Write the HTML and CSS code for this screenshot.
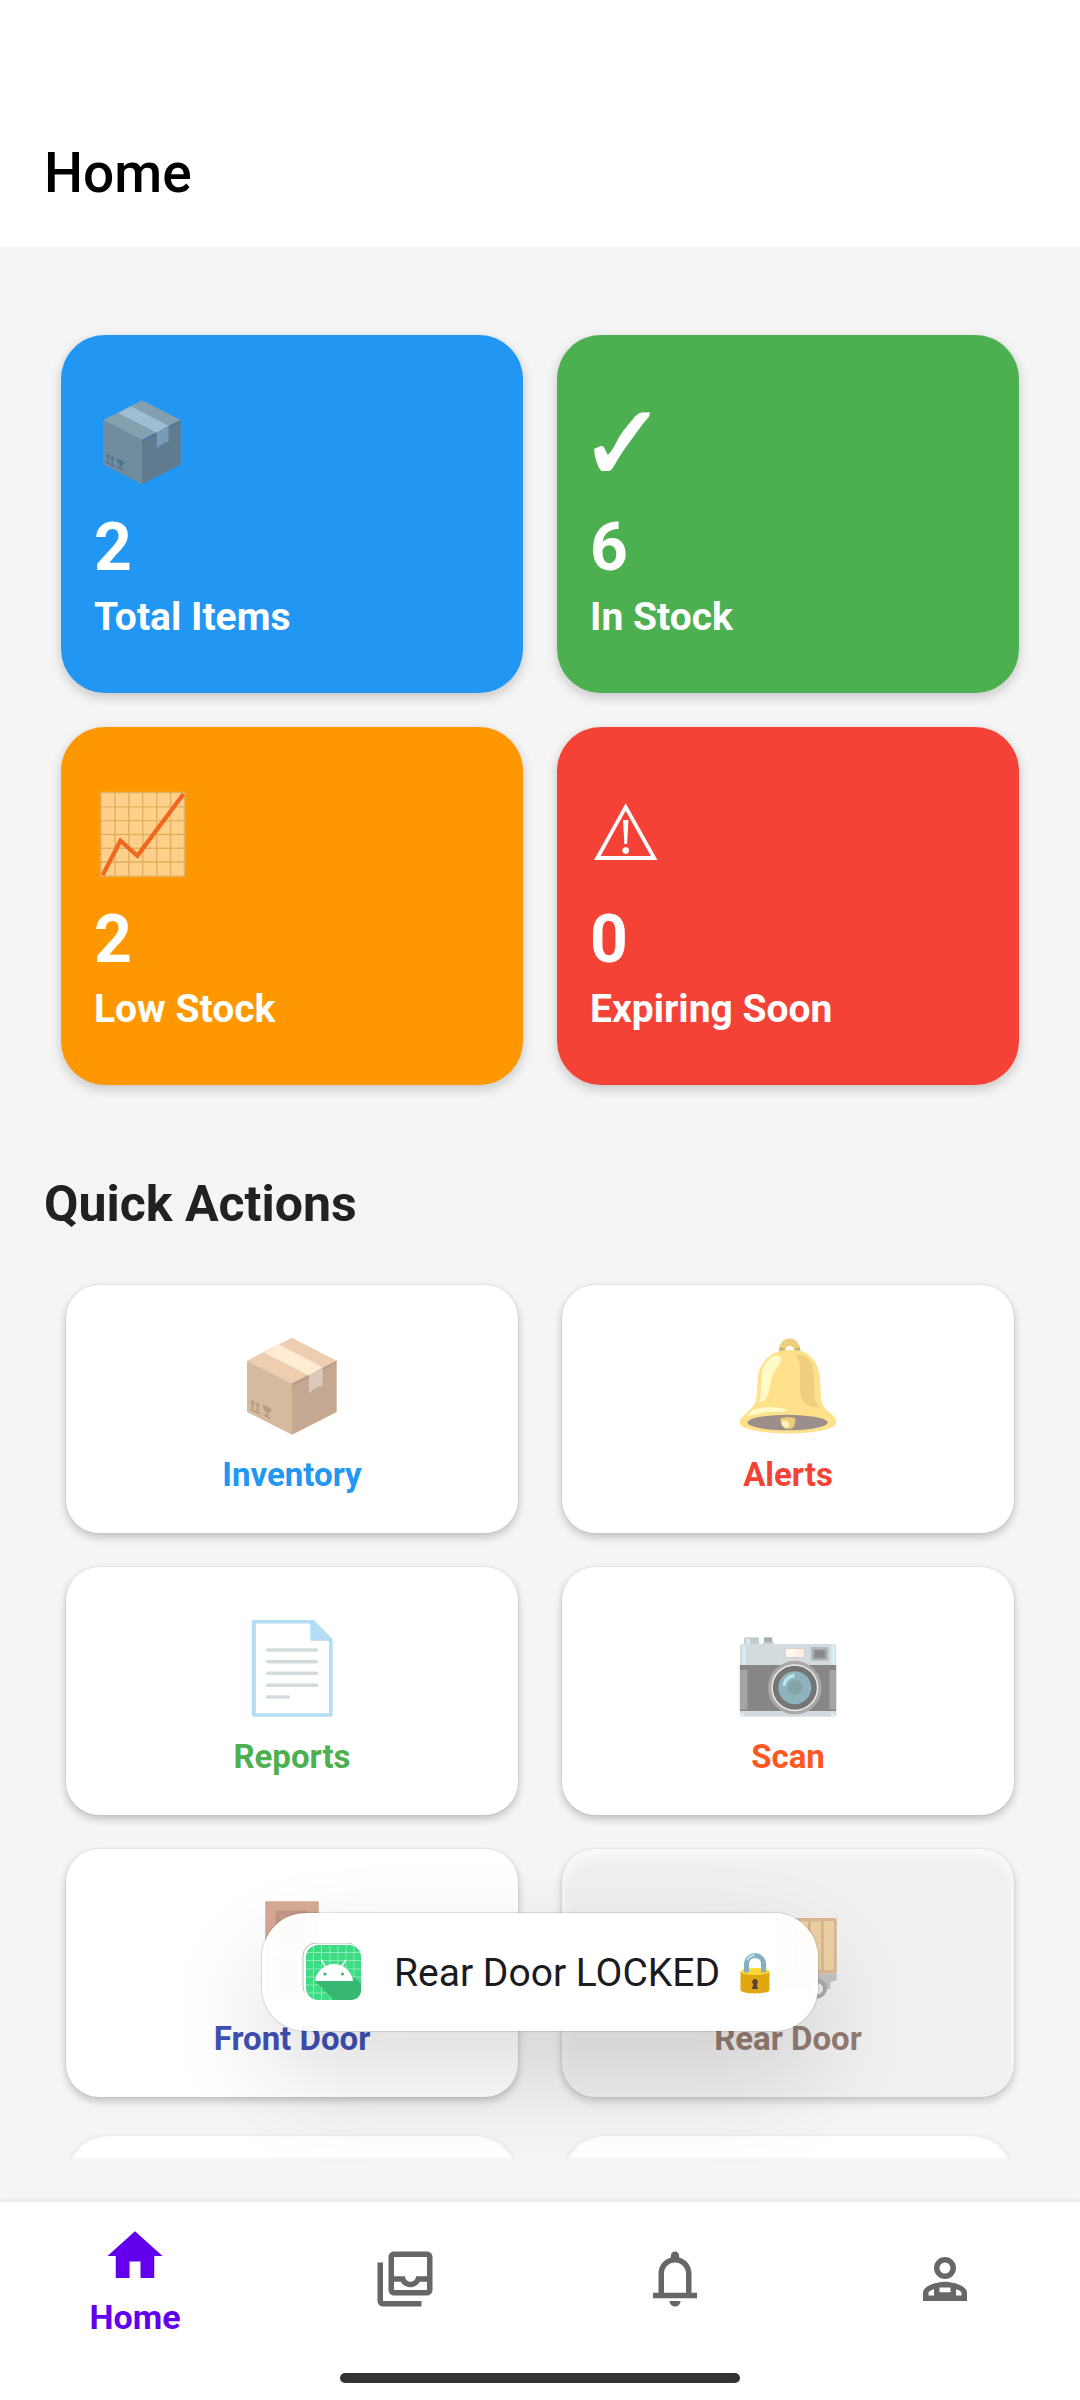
FILE: index.html
```html
<!DOCTYPE html>
<html lang="en">
<head>
    <meta charset="UTF-8">
    <meta name="viewport" content="width=device-width, initial-scale=1.0">
    <title>Home</title>
    <link rel="stylesheet" href="styles.css">
</head>
<body>
    <!-- package is used twice, its colours come from the card -->
    <svg class="sprite" aria-hidden="true">
        <symbol id="package" viewBox="0 0 128 128">
            <path fill="var(--box-top)" d="M64 4.5 119 32.8 64 61 8.6 32.8z"/>
            <path fill="var(--box-left)" d="M8.6 32.8 64 61v63L8.6 96z"/>
            <path fill="var(--box-right)" d="M119 32.8 64 61v63l55-28z"/>
            <path fill="var(--box-mark)" d="M64 61 119 32.8v1.6Q92 52 64 63.5z"/>
            <path fill="var(--box-tape)" d="M48 13 30 23l55 28 16.700-10z"/>
            <path fill="var(--box-flap)" d="M85 51l16.700-10v23l-5 1-7.200 4-4.500 4z"/>
            <g fill="none" stroke="var(--box-mark)" stroke-width="2">
                <path d="M15.500 92V83M21.700 95V86M13 92.500 25 98.500M13.500 84.500l2-2 2.500 3M19.500 88l2.200-2.500 2.500 3M29 99.500l8.500 4.500M33.500 96v6"/>
            </g>
            <path fill="var(--box-mark)" d="M27.500 86.600 39 92.300c-.5 4-3.500 6-6 4.500-2.500-1.500-5-4.500-5.500-10.200z"/>
        </symbol>
    </svg>

    <header class="topbar">
        <h1>Home</h1>
    </header>

    <main class="content">
        <section class="stats">
            <div class="stat blue">
                <svg class="stat-icon" aria-hidden="true"><use href="#package"/></svg>
                <span class="stat-value">2</span>
                <span class="stat-label">Total Items</span>
            </div>
            <div class="stat green">
                <svg class="stat-icon" viewBox="0 0 96 90" aria-hidden="true">
                    <path fill="#fff" d="M4 52 10.600 49q3-.5 4.200 3L17.800 58Q22 54 25 48q3-7 7.600-13.300Q37 29 43 22q4-5.500 8.500-6.500l8.300-.2q.300 2-.8 4.400Q53 26 46.400 35.700L32.600 54.700Q28 62 24 69q-2 4-4.500 5h-8.200Q8 70 6.800 65.700 4.500 59 4 52z"/>
                </svg>
                <span class="stat-value">6</span>
                <span class="stat-label">In Stock</span>
            </div>
            <div class="stat orange">
                <svg class="stat-icon" viewBox="0 0 128 128" aria-hidden="true">
                    <path fill="#ffd08a" stroke="#e1af61" stroke-width="2" d="M5.500 5h119v119H5.500z"/>
                    <path fill="none" stroke="#e1af61" stroke-width="2" d="M25.600 5v119M45.300 5v119M65 5v119M85 5v119M104.600 5v119M5 25.400h119M5 45h119M5 64.600h119M5 84.200h119M5 103.800h119"/>
                    <path fill="none" stroke="#f0681f" stroke-width="6" d="M8 122.700 33.400 73.500l24 21.500L123 7"/>
                </svg>
                <span class="stat-value">2</span>
                <span class="stat-label">Low Stock</span>
            </div>
            <div class="stat red">
                <svg class="stat-icon" viewBox="0 0 96 90" aria-hidden="true">
                    <path fill="#fff" fill-rule="evenodd" d="M35.700 14.300 4 71h63.400zM35.700 21.700 60.900 67H10.600z"/>
                    <path fill="#fff" d="M33 31h5.500l-1.400 24h-2.700z"/>
                    <circle fill="#fff" cx="35.700" cy="61.600" r="3.300"/>
                </svg>
                <span class="stat-value">0</span>
                <span class="stat-label">Expiring Soon</span>
            </div>
        </section>

        <h2>Quick Actions</h2>

        <section class="actions">
            <button type="button" class="action inventory">
                <svg class="action-icon" aria-hidden="true"><use href="#package"/></svg>
                <span>Inventory</span>
            </button>
            <button type="button" class="action alerts">
                <svg class="action-icon" viewBox="0 0 128 128" aria-hidden="true">
                    <path fill="#efcf7e" fill-rule="evenodd" d="M53 22c-1-9 5-16.500 13-16.500S80 13 79 22zM60.500 20h11c0-7-11-7-11 0z"/>
                    <path fill="#c9b27c" d="M53.200 16.500l7.300 1L59 21h-5.500zM71.500 17.500l7.300-1V22h-6z"/>
                    <path fill="#ffe18c" d="M66 19.700c-9 0-14 1-19 4C36 29 29 40 27 52c-1.600 11-.5 20-2.500 30-1.500 7-7 10-12 15.500-4 4-8 7-8 10.500s2 6 5 7c14 5 33 7.500 54.400 7.500S105 120 118 115c3.500-1.500 5.500-4 5.500-7.500 0-4-4-7-8.500-11-5-4.500-9-8-10-16-1.500-11-.5-22-2.500-32C100.500 37 95 29 86 23.500c-5-3-11-3.800-20-3.800z"/>
                    <path fill="#efcf7e" d="M72.400 24.600C83 25 90 29 93 36c4 9 3 25 3.200 36 .3 8 2.500 14 6.800 18.700-9-.5-16-2.500-20-7.400-3.500-4.500-4.300-10-4.300-17V43c0-8-2-14-6.300-18.400z"/>
                    <path fill="#fffac8" d="M55.500 31c0-5-8-5.500-14-1C33 37 31 47 31 58c.3 9-.7 16-2 26 5 0 9-4 11-12 2.500-11 4-20 8-27 3-5 7.500-8 7.500-14zM14.300 101c3-6 7-9 15-10 12-1.500 27-1 34.700 3.400-9 2.500-17 1-26 2-8 .8-15 2.600-23.700 4.600z"/>
                    <ellipse fill="#9c8f8b" cx="63.500" cy="109" rx="49.500" ry="9.500"/>
                    <path fill="#e9cc7c" d="M55 103.500c5-1.500 13-1.500 17.500 0 1.500 4-.5 12.500-5 13h-6c-5-1-8-9-6.500-13z"/>
                    <ellipse fill="#fff0b0" cx="61" cy="111" rx="5" ry="4" transform="rotate(40 61 111)"/>
                </svg>
                <span>Alerts</span>
            </button>
            <button type="button" class="action reports">
                <svg class="action-icon" viewBox="0 0 128 128" aria-hidden="true">
                    <path fill="#b4dcf5" d="M16.500 5H91l23 23.700v93.600q0 1.700-1.700 1.700h-96q-1.600 0-1.600-1.700V6.700Q14.700 5 16.500 5z"/>
                    <path fill="#fff" d="M19.500 9.300H84q2.600 0 2.600 2.500v18.600H107q2.600 0 2.600 2.600v86.800H19.500z"/>
                    <path stroke="#d3dbde" stroke-width="4.300" stroke-linecap="round" d="M34 41.800h60.300M34 56.200h60.300M34 70.600h60.300M34 85.300h60.300M34 99.700h25.500"/>
                </svg>
                <span>Reports</span>
            </button>
            <button type="button" class="action scan">
                <svg class="action-icon" viewBox="0 0 128 128" aria-hidden="true">
                    <rect fill="#c2cdd1" x="10" y="26" width="18.500" height="12" rx="2"/>
                    <rect fill="#d8eef3" x="13" y="28" width="4" height="9"/>
                    <path fill="#c2cdd1" d="M35 31h10l2.500 4H32z"/>
                    <rect fill="#a0afb8" x="34.300" y="26" width="10.500" height="6" rx="2"/>
                    <rect fill="#d4dbdf" x="4.800" y="34.500" width="118.500" height="89.500" rx="3"/>
                    <path fill="#d8eef3" d="M8 37h4v23H8zM117.500 36h4.500v24h-4.500zM6 119h4v4H6zM117 119h4v4h-4z"/>
                    <path fill="#878787" d="M4.800 60.300h118.500V117H4.800z"/>
                    <path fill="#a5a5a5" d="M5 66.500h8q1 0 1 1V115H5zM115 66.500h8V115h-8z"/>
                    <rect fill="#fff7ec" stroke="#c4c8ca" x="60.500" y="39.800" width="23.500" height="11.400"/>
                    <path fill="#fdf0e2" d="M74 40.500h9.500v10H74z"/>
                    <rect fill="#b4bbc0" x="92" y="38" width="22" height="17" rx="1"/>
                    <rect fill="#878787" stroke="#9d9fa1" stroke-width="2" x="96" y="41.500" width="14" height="10.500"/>
                    <circle fill="#a9a9a9" cx="72.400" cy="88.200" r="33"/>
                    <circle fill="#757575" stroke="#f2ece9" stroke-width="1.800" cx="72.400" cy="88.200" r="28"/>
                    <circle fill="#8db3bd" cx="72.400" cy="88.200" r="20.300"/>
                    <circle fill="#86a2aa" cx="72.400" cy="88.200" r="9"/>
                    <path fill="none" stroke="#bfe2ec" stroke-width="4.500" stroke-linecap="round" d="M59.500 84c1-5 5-9 10.500-10.500"/>
                </svg>
                <span>Scan</span>
            </button>
            <button type="button" class="action front-door">
                <svg class="action-icon" viewBox="0 0 128 128" aria-hidden="true">
                    <rect fill="#d5a995" x="31" y="4" width="66" height="120.500" rx="1.500"/>
                    <path fill="#bf9686" d="M44 15.600h38v38H44zM44 78h38v38H44z"/>
                    <path fill="#c79d8c" d="M49 20h33v33.600H49zM49 82h33v34H49z"/>
                    <circle fill="#fff" cx="42" cy="64" r="5"/>
                </svg>
                <span>Front Door</span>
            </button>
            <button type="button" class="action rear-door pressed">
                <svg class="action-icon" viewBox="0 0 128 128" aria-hidden="true">
                    <path fill="#e4e4e4" d="M55 52H32L22 72 5 78v28h50z"/>
                    <path fill="#c4c4c4" d="M5 93h119v8l-8 3v8h-6L6 106z"/>
                    <rect fill="#ddb694" x="55" y="24.600" width="69" height="68.400" rx="2"/>
                    <path fill="#edd2a4" d="M59 28.500h13V89H59zM75 28.500h13.500V89H75zM92 28.500h12.500V89H92zM108 28.500h12.500V89H108z"/>
                    <circle fill="#eee" stroke="#aeaaa8" stroke-width="5" cx="100" cy="111.600" r="9.500"/>
                    <circle fill="#eee" stroke="#aeaaa8" stroke-width="5" cx="30" cy="111.600" r="9.500"/>
                </svg>
                <span>Rear Door</span>
            </button>
        </section>

        <section class="panels">
            <div class="panel"></div>
            <div class="panel"></div>
        </section>
    </main>

    <div class="toast" role="status">
        <svg class="toast-app" viewBox="0 2 60 60" aria-hidden="true">
            <rect fill="#fff" stroke="#bdbdbd" stroke-width="1" x="1" y="2" width="57" height="56" rx="13"/>
            <rect fill="#fff" x="2" y="3" width="58" height="58" rx="14"/>
            <rect fill="#3ddc84" x="4" y="4" width="55" height="55" rx="12"/>
            <path stroke="#8beab5" stroke-width="1" d="M11.500 5v53M19.500 4v55M28 4v55M36 4v55M44 4v55M52 5v53M5 11.500h53M4 19.500h55M4 28h55M4 36h55M4 44h55M5 52h53"/>
            <path fill="#36b873" d="M13 40h38l1-4 7 7v5q0 11-11 11H32z"/>
            <path fill="#fff" d="M13 40c1-9 9-17 19-17s18 8 19 17z"/>
            <path stroke="#fff" stroke-width="1.500" d="M19.500 19l4 7M43.500 19l-4 7"/>
            <circle fill="#36b873" cx="23" cy="33" r="1.600"/>
            <circle fill="#36b873" cx="40.500" cy="33" r="1.600"/>
        </svg>
        <span>Rear Door LOCKED</span>
        <svg class="toast-lock" viewBox="0 0 30 42" aria-hidden="true">
            <path fill="none" stroke="#87afc1" stroke-width="5" d="M6.500 21v-8.500c0-12 17-12 17 0V21"/>
            <path fill="none" stroke="#b9e4ea" stroke-width="1.800" stroke-linecap="round" d="M7.500 7.500Q9.500 4 14 3"/>
            <path fill="#e2a610" d="M.500 20h29v18c0 4.500-29 4.500-29 0z"/>
            <ellipse fill="#fdd835" cx="15" cy="19.500" rx="14.500" ry="3.500"/>
            <path fill="#87afc1" d="M4 14h5v6.500H4zM21 14h5v6.500h-5z"/>
            <path fill="#5d4037" d="M15 27a3 3 0 0 1 1.800 5.300L18 37h-6l1.200-4.700A3 3 0 0 1 15 27z"/>
        </svg>
    </div>

    <nav class="tabbar">
        <div class="tabs">
            <a href="#home" class="tab active" aria-current="page">
                <svg viewBox="0 0 24 24" aria-hidden="true"><path d="M10 20v-6h4v6h5v-8h3L12 3 2 12h3v8z"/></svg>
                <span>Home</span>
            </a>
            <a href="#inventory" class="tab" aria-label="Inventory">
                <svg viewBox="0 0 24 24" aria-hidden="true"><path d="M4 6H2v14c0 1.100.9 2 2 2h14v-2H4V6z"/><path fill-rule="evenodd" d="M20 2H8c-1.100 0-2 .9-2 2v12c0 1.100.9 2 2 2h12c1.100 0 2-.9 2-2V4c0-1.100-.9-2-2-2zM20 16H8v-3h2.500c.69 1.190 1.970 2 3.450 2s2.750-.81 3.450-2H20v3zM20 11h-4c0 1.100-.9 2-2 2s-2-.9-2-2H8V4h12v7z"/></svg>
            </a>
            <a href="#alerts" class="tab" aria-label="Alerts">
                <svg viewBox="0 0 24 24" aria-hidden="true"><path d="M12 22c1.100 0 2-.9 2-2h-4c0 1.100.9 2 2 2z"/><path fill-rule="evenodd" d="M12 2c-.83 0-1.500.67-1.500 1.500v.7C7.900 4.900 6 7.200 6 10v7H4v2h16v-2h-2v-7c0-2.800-1.900-5.100-4.500-5.800v-.7C13.500 2.670 12.830 2 12 2zM16 17H8v-7c0-2.200 1.800-4 4-4s4 1.800 4 4v7z"/></svg>
            </a>
            <a href="#profile" class="tab" aria-label="Profile">
                <svg viewBox="0 0 24 24" aria-hidden="true"><path fill-rule="evenodd" d="M12 4a4 4 0 1 0 0 8 4 4 0 0 0 0-8zM12 6a2 2 0 1 1 0 4 2 2 0 0 1 0-4z"/><path fill-rule="evenodd" d="M4 17c0-2.660 5.330-4 8-4s8 1.340 8 4v3H4zM6 18h2v-2.300c-1.200.4-2 .9-2 1.300zM10 15.100h4V16.800h-4zM16 15.700V18h2v-1c0-.4-.8-.9-2-1.300z"/></svg>
            </a>
        </div>
        <div class="gesture"></div>
    </nav>
</body>
</html>
```
FILE: styles.css
```css
* {
    box-sizing: border-box;
}
body {
    display: flex;
    flex-direction: column;
    height: 100vh;
    margin: 0;
    position: relative;
    font-family: Roboto, "Liberation Sans", sans-serif;
    background-color: #f5f5f5;
}
.sprite {
    position: absolute;
    width: 0;
    height: 0;
}
.topbar {
    padding: 141px 44px 42px;
    background: #fff;
}
h1 {
    margin: 0;
    font-size: 55px;
    line-height: 64px;
    font-weight: 500;
    color: #000;
}

/* scrolling area, cut off above the tab bar */
.content {
    flex: 1;
    min-height: 0;
    margin-bottom: 44px;
    padding: 88px 44px 0;
    overflow-y: auto;
    scrollbar-width: none;
}
.stats {
    display: grid;
    grid-template-columns: 1fr 1fr;
    gap: 34px;
    padding: 0 17px;
}
.stat {
    display: flex;
    flex-direction: column;
    align-items: flex-start;
    padding: 62px 33px 53px;
    border-radius: 44px;
    color: #fff;
    font-weight: 700;
    box-shadow: 0 4px 12px rgba(0,0,0,0.2);
}
.stat-icon {
    width: 96px;
    height: 90px;
}
.stat-value {
    margin-top: 23px;
    font-size: 66px;
    line-height: 76px;
}
.stat-label {
    margin-top: 8px;
    font-size: 39px;
    line-height: 46px;
}
.blue {
    background-color: #2196f3;
    --box-top: #849fae;
    --box-left: #708c9e;
    --box-right: #607b8f;
    --box-tape: #9cbfd3;
    --box-flap: #779cb9;
    --box-mark: #507693;
}
.green {
    background-color: #4caf50;
}
.orange {
    background-color: #ff9800;
}
.red {
    background-color: #f44336;
}
h2 {
    margin: 90px 0 52px;
    font-size: 50px;
    line-height: 58px;
    font-weight: 700;
    color: #212121;
}

.actions, .panels {
    display: grid;
    grid-template-columns: 1fr 1fr;
    gap: 34px 44px;
    padding: 0 22px;
}
.action {
    display: flex;
    flex-direction: column;
    align-items: center;
    gap: 18px;
    padding: 49px 0 39px;
    border: none;
    border-radius: 33px;
    background-color: #fff;
    font-family: inherit;
    font-size: 33px;
    line-height: 38px;
    font-weight: 700;
    cursor: pointer;
    box-shadow: 0 4px 8px rgba(0,0,0,0.22), 0 0 2px rgba(0,0,0,0.12);
}
.action-icon {
    width: 104px;
    height: 104px;
}
.inventory {
    color: #2196f3;
    --box-top: #edcfb0;
    --box-left: #d6ba9f;
    --box-right: #c5a891;
    --box-tape: #ffecd3;
    --box-flap: #dbc8ba;
    --box-mark: #b59c85;
}
.alerts {
    color: #f44336;
}
.reports {
    color: #4caf50;
}
.scan {
    color: #ff5722;
}
.front-door {
    color: #3f51b5;
}
.rear-door {
    color: #957c73;
}
.pressed {
    background-color: #f0f0f0;
    box-shadow: 0 4px 8px rgba(0,0,0,0.2), 0 0 2px rgba(0,0,0,0.12), inset 0 6px 12px rgba(255,255,255,0.8);
}
.panels {
    margin-top: 39px;
    padding-bottom: 44px;
}
.panel {
    height: 248px;
    border-radius: 44px;
    background-color: #fff;
    box-shadow: 0 2px 8px rgba(0,0,0,0.1);
}

.toast {
    position: absolute;
    bottom: 369px;
    left: 50%;
    transform: translateX(-50%);
    display: flex;
    align-items: center;
    padding: 30px 48px 28px 40px;
    border-radius: 44px;
    background-color: rgba(255,255,255,0.97);
    color: #1b1b1f;
    font-size: 39px;
    line-height: 46px;
    white-space: nowrap;
    box-shadow: 0 0 1px 1px rgba(0,0,0,0.12), 0 44px 100px rgba(0,0,0,0.14);
}
.toast-app {
    width: 60px;
    height: 60px;
    margin-right: 32px;
}
.toast-lock {
    width: 30px;
    height: 42px;
    margin-left: 20px;
}

.tabbar {
    padding-bottom: 17px;
    background: #fff;
    box-shadow: 0 -1px 6px rgba(0,0,0,0.08);
}
.tabs {
    display: grid;
    grid-template-columns: repeat(4, 1fr);
    height: 154px;
}
.tab {
    display: flex;
    flex-direction: column;
    align-items: center;
    justify-content: center;
    gap: 9px;
    color: #676767;
    font-size: 34px;
    line-height: 38px;
    font-weight: 700;
    text-decoration: none;
}
.tab svg {
    width: 66px;
    height: 66px;
    fill: currentColor;
}
.tab.active {
    color: #6200ee;
}
.gesture {
    width: 400px;
    height: 10px;
    margin: 17px auto 0;
    border-radius: 5px;
    background: #333;
}
```
